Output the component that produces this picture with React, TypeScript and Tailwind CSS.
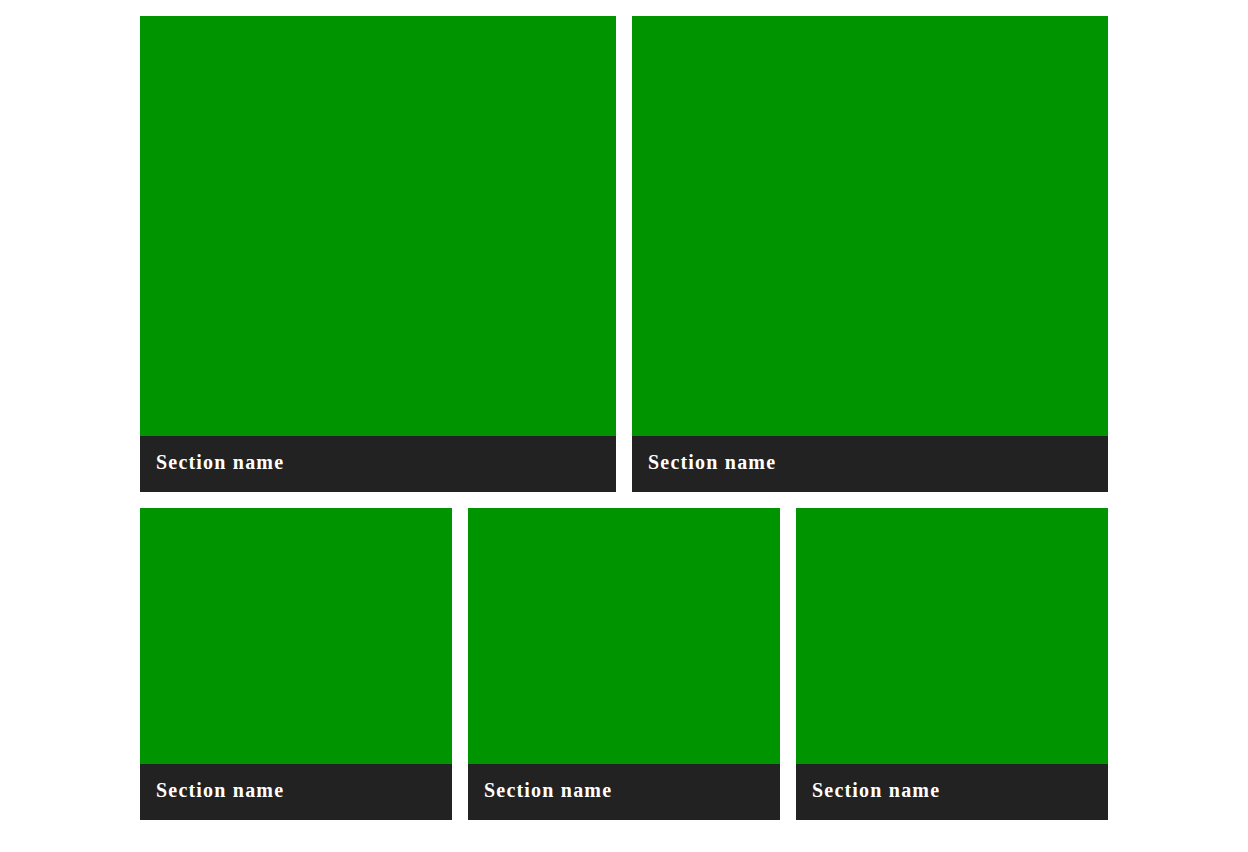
import React from "react";

function Tile({ green }: { green: string }) {
  return (
    <div className="flex flex-col">
      <div className={`bg-[#009400] ${green}`} />
      <div className="h-[56px] bg-[#222222] flex items-center px-4 pb-[4px]">
        <span
          className="text-white font-bold text-[20px] leading-none tracking-[1.2px]"
          style={{ fontFamily: '"Liberation Serif", serif' }}
        >
          Section name
        </span>
      </div>
    </div>
  );
}

export default function App() {
  return (
    <div className="w-[1248px] h-[852px] bg-white pt-4">
      <div className="w-[968px] mx-auto flex flex-col gap-4">
        <div className="grid grid-cols-2 gap-4">
          <Tile green="h-[420px]" />
          <Tile green="h-[420px]" />
        </div>
        <div className="grid grid-cols-3 gap-4">
          <Tile green="h-[256px]" />
          <Tile green="h-[256px]" />
          <Tile green="h-[256px]" />
        </div>
      </div>
    </div>
  );
}
